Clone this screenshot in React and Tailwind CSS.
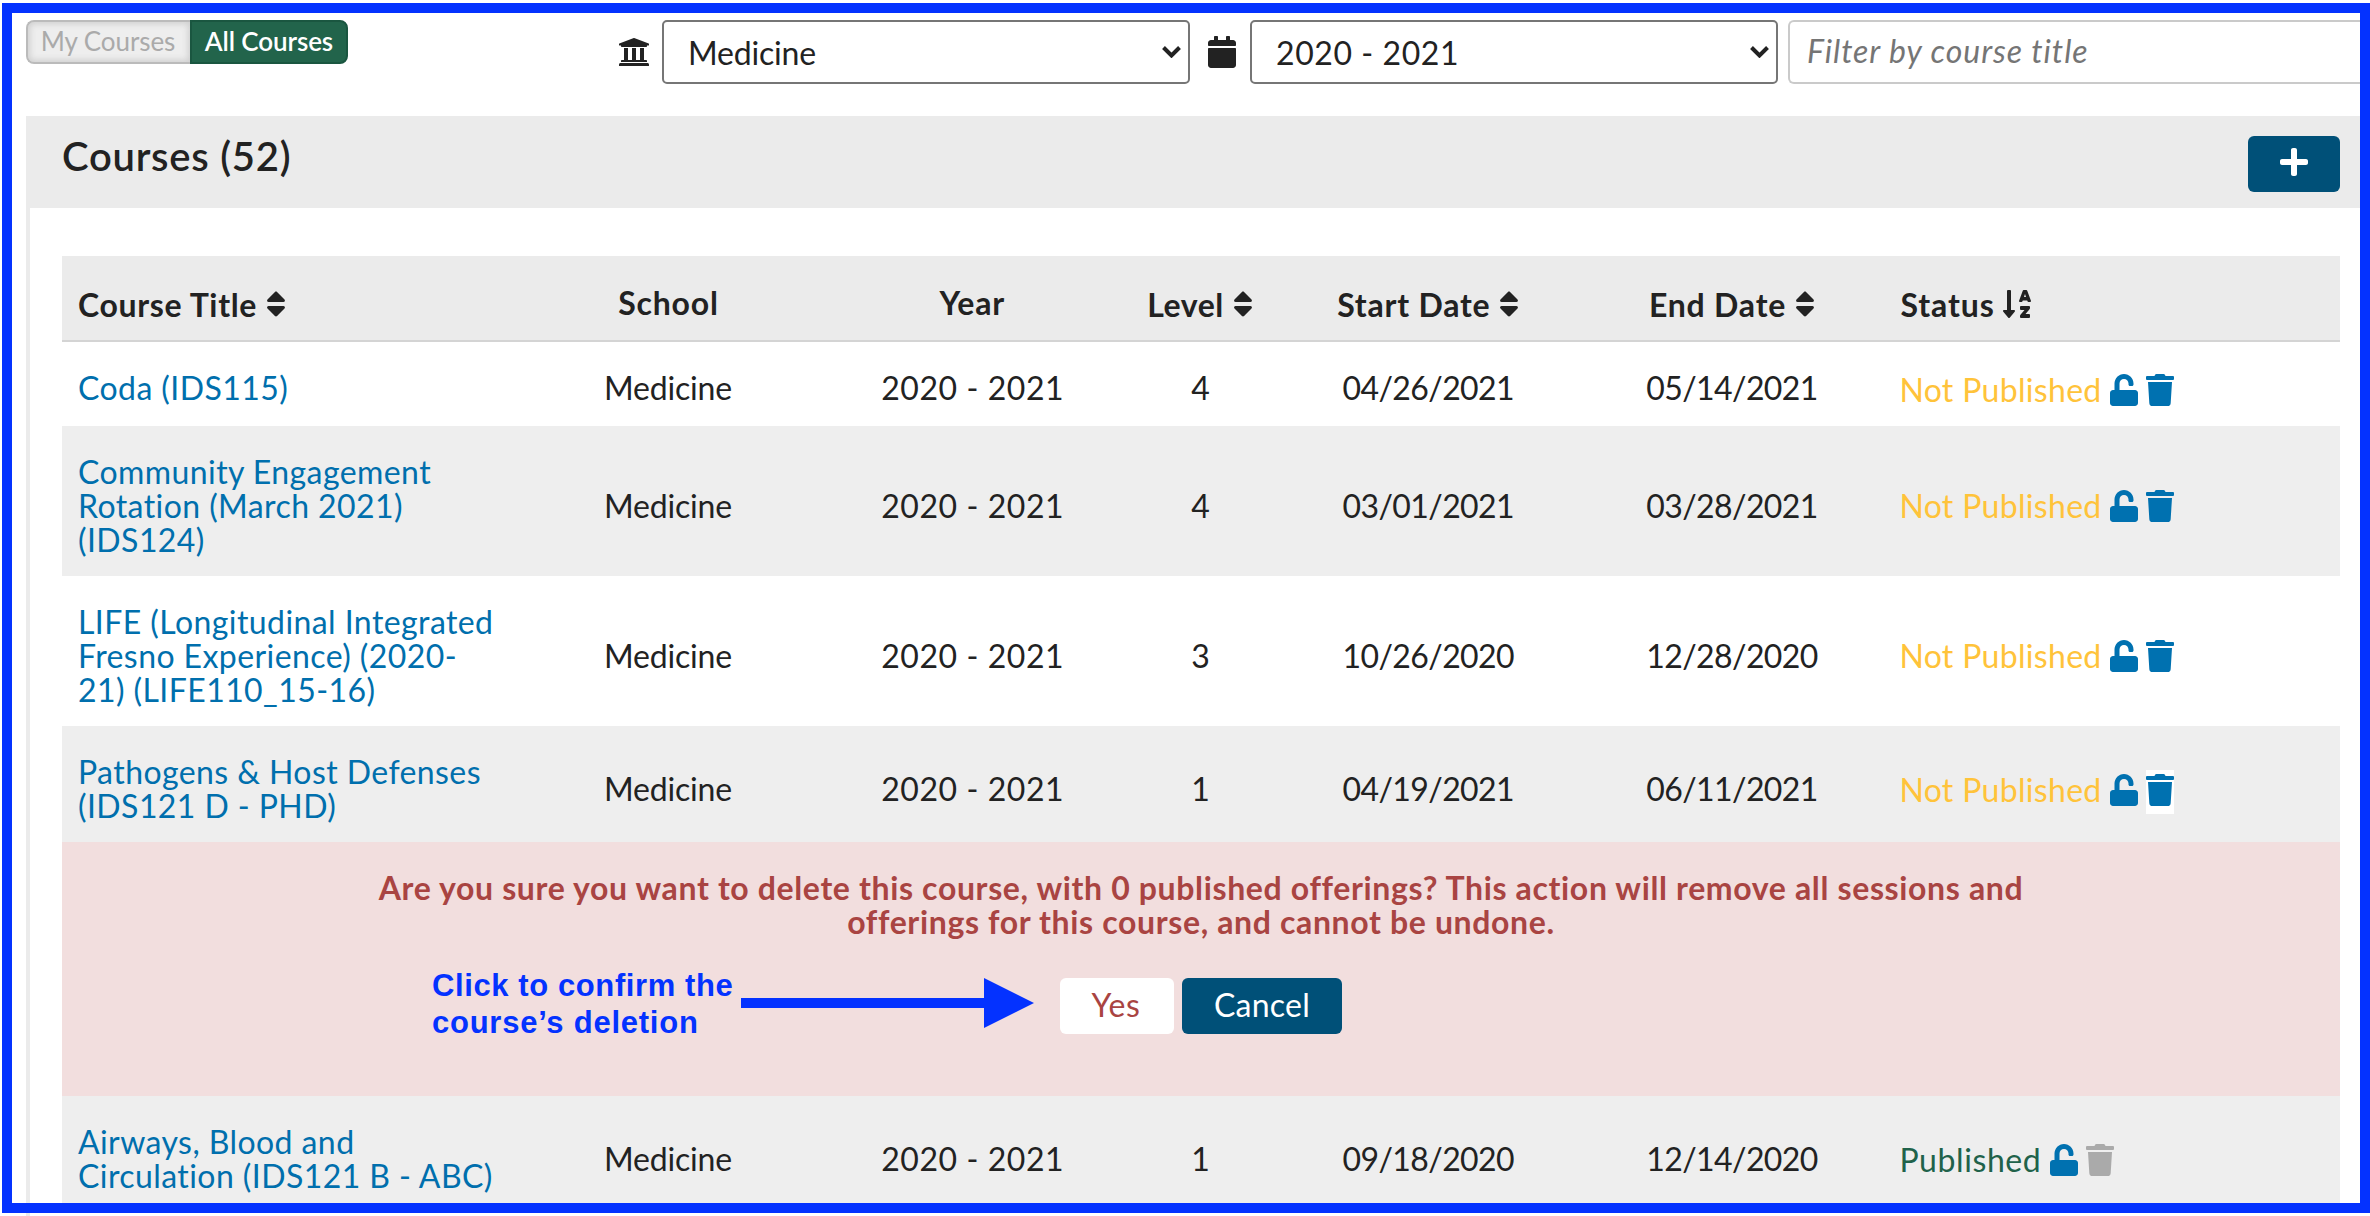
import React from "react";
import {
  FaUniversity,
  FaCalendar,
  FaSort,
  FaSortAlphaDown,
  FaUnlock,
  FaTrash,
  FaPlus,
} from "react-icons/fa";

const GRID = "grid grid-cols-[3fr_2fr_2fr_1fr_2fr_2fr_3fr]";

const beforeConfirm = [
  {
    title: ["Coda (IDS115)"],
    level: "4",
    start: "04/26/2021",
    end: "05/14/2021",
    row: "h-[84px] bg-white",
    nudge: "pt-0.5",
  },
  {
    title: ["Community Engagement", "Rotation (March 2021)", "(IDS124)"],
    level: "4",
    start: "03/01/2021",
    end: "03/28/2021",
    row: "h-[150px] bg-[#eeeeee]",
    nudge: "",
  },
  {
    title: ["LIFE (Longitudinal Integrated", "Fresno Experience) (2020-", "21) (LIFE110_15-16)"],
    level: "3",
    start: "10/26/2020",
    end: "12/28/2020",
    row: "h-[150px] bg-white",
    nudge: "",
  },
  {
    title: ["Pathogens & Host Defenses", "(IDS121 D - PHD)"],
    level: "1",
    start: "04/19/2021",
    end: "06/11/2021",
    row: "h-[116px] bg-[#eeeeee]",
    nudge: "pt-px",
    active: true,
  },
];

const afterConfirm = {
  title: ["Airways, Blood and", "Circulation (IDS121 B - ABC)"],
  level: "1",
  start: "09/18/2020",
  end: "12/14/2020",
  row: "h-[115px] bg-[#eeeeee]",
  nudge: "pt-px",
  published: true,
};

function Chevron() {
  return (
    <svg className="h-3 w-[19px]" viewBox="0 0 19 12" fill="none" stroke="#222" strokeWidth="4">
      <path d="M1.5 1.5 9.5 9.5 17.5 1.5" />
    </svg>
  );
}

function Select({ value, className }) {
  return (
    <div
      className={`flex h-16 w-[528px] items-center justify-between rounded-[5px] border-2 border-[#767676] bg-white pr-[7px] pl-6 ${className}`}
    >
      <span className="pt-px">{value}</span>
      <Chevron />
    </div>
  );
}

function SortIcon() {
  return <FaSort className="ml-[9px] h-8 w-5 shrink-0" />;
}

function CourseRow({ c }) {
  return (
    <div className={`pt-[29px] ${c.row}`}>
      <div className={`${GRID} items-center text-center`}>
        <a className="pl-4 text-left tracking-[0.42px] text-[#006fad]">
          {c.title.map((line) => (
            <span key={line} className="block whitespace-nowrap">
              {line}
            </span>
          ))}
        </a>
        <span className="pr-[3px] tracking-[-0.2px]">Medicine</span>
        <span className="pr-px tracking-[0.58px]">2020 - 2021</span>
        <span className="pr-px">{c.level}</span>
        <span className="pr-px tracking-[-0.6px]">{c.start}</span>
        <span className="pr-px tracking-[-0.6px]">{c.end}</span>
        <div className={`flex h-[34px] items-start pl-4 text-left ${c.nudge}`}>
          {c.published ? (
            <span className="-ml-px w-[151px] tracking-[0.6px] text-[#20624a]">Published</span>
          ) : (
            <span className="-ml-px w-[211px] tracking-[0.32px] whitespace-nowrap text-[#ffc33a]">
              Not Published
            </span>
          )}
          <FaUnlock className="mt-px h-8 w-7 text-[#0071b0]" />
          <span className={`-mt-[3px] ml-2 h-11 pt-1 ${c.active ? "bg-white" : ""}`}>
            <FaTrash className={`h-8 w-7 ${c.published ? "text-[#aaaaaa]" : "text-[#0071b0]"}`} />
          </span>
        </div>
      </div>
    </div>
  );
}

function ConfirmRemoval() {
  return (
    <div className="relative h-[254px] bg-[#f2dede] pt-[29px] text-center text-[#a94442]">
      <p className="font-bold tracking-[0.64px]">
        Are you sure you want to delete this course, with 0 published offerings? This action will
        remove all sessions and
        <br />
        offerings for this course, and cannot be undone.
      </p>
      <div className="mt-[39px] flex justify-center gap-2">
        <button className="h-14 w-[114px] rounded-md bg-white pr-0.5 pb-0.5 tracking-[0.6px]">
          Yes
        </button>
        <button className="h-14 w-40 rounded-md bg-[#005078] pb-0.5 tracking-[0.26px] text-white">
          Cancel
        </button>
      </div>
      <div className="absolute top-[125px] left-[370px] flex items-start text-left font-['Liberation_Sans',sans-serif] text-[31px] leading-[37px] font-bold text-[#0432ff]">
        <p className="w-[309px] whitespace-nowrap">
          <span className="block tracking-[0.6px]">Click to confirm the</span>
          <span className="block tracking-[0.75px]">course’s deletion</span>
        </p>
        <svg className="mt-[11px] h-[50px] w-[293px]" viewBox="0 0 293 50" fill="#0432ff">
          <path d="M0 20H243V0L293 25 243 50V30H0Z" />
        </svg>
      </div>
    </div>
  );
}

export default function App() {
  return (
    <div className="relative h-[1216px] w-[2370px] overflow-hidden bg-white pt-5 pl-[26px] font-['Lato',sans-serif] text-[32px] leading-[34px] text-[#222]">
      <div className="flex h-24 items-start">
        <div className="flex h-11 text-[26px] leading-[34px]">
          <div className="w-[164px] rounded-l-lg border-2 border-r-0 border-[#bbbbbb] bg-[#eeeeee] pt-0.5 pr-0.5 text-center tracking-[-0.07px] text-[#aaaaaa] shadow-[inset_0_0_6px_2px_#cfcfcf]">
            My Courses
          </div>
          <div className="w-[158px] rounded-r-lg border-2 border-[#1a5640] bg-[#22644b] pt-0.5 text-center font-semibold tracking-[-0.1px] text-white">
            All Courses
          </div>
        </div>
        <FaUniversity className="mt-4 ml-[270px] size-8" />
        <Select value="Medicine" className="ml-3 tracking-[-0.2px]" />
        <FaCalendar className="mt-4 ml-[18px] h-8 w-7" />
        <Select value="2020 - 2021" className="ml-[14px] tracking-[0.58px]" />
        <div className="ml-[10px] flex h-16 flex-1 items-center rounded-l-md border-2 border-r-0 border-[#cacaca] pb-[3px] pl-[17px] tracking-[0.95px] text-[#757575] italic">
          Filter by course title
        </div>
      </div>

      <div className="h-[1100px] border-l-4 border-[#ebebeb]">
        <div className="flex h-[92px] items-start justify-between bg-[#ebebeb] pt-5 pr-[30px] pl-8">
          <h2 className="-mt-px text-[40px] leading-[42px] font-semibold tracking-[0.75px]">
            Courses (52)
          </h2>
          <button className="flex h-14 w-[92px] justify-center rounded-md bg-[#005078] pt-[10px] text-white">
            <FaPlus className="h-8 w-7" />
          </button>
        </div>

        <div className="mt-12 mr-[30px] ml-8">
          <div
            className={`${GRID} h-[86px] border-b-2 border-[#d4d4d4] bg-[#ebebeb] pt-8 text-center font-bold`}
          >
            <div className="flex pl-4 tracking-[0.65px]">
              Course Title
              <SortIcon />
            </div>
            <div className="-mt-0.5 pr-0.5 tracking-[0.79px]">School</div>
            <div className="-mt-0.5 pr-0.5 tracking-[0.79px]">Year</div>
            <div className="flex justify-center pr-0.5 tracking-[0.5px]">
              Level
              <SortIcon />
            </div>
            <div className="flex justify-center pr-px tracking-[0.78px]">
              Start Date
              <SortIcon />
            </div>
            <div className="flex justify-center pr-px tracking-[0.78px]">
              End Date
              <SortIcon />
            </div>
            <div className="flex pl-4 tracking-[0.94px]">
              Status
              <FaSortAlphaDown className="ml-2 h-8 w-7" />
            </div>
          </div>

          {beforeConfirm.map((c) => (
            <CourseRow key={c.title[0]} c={c} />
          ))}
          <ConfirmRemoval />
          <CourseRow c={afterConfirm} />
        </div>
      </div>

      <div className="pointer-events-none absolute top-[3px] right-0 bottom-[3px] left-0.5 border-10 border-[#0432ff]" />
    </div>
  );
}
